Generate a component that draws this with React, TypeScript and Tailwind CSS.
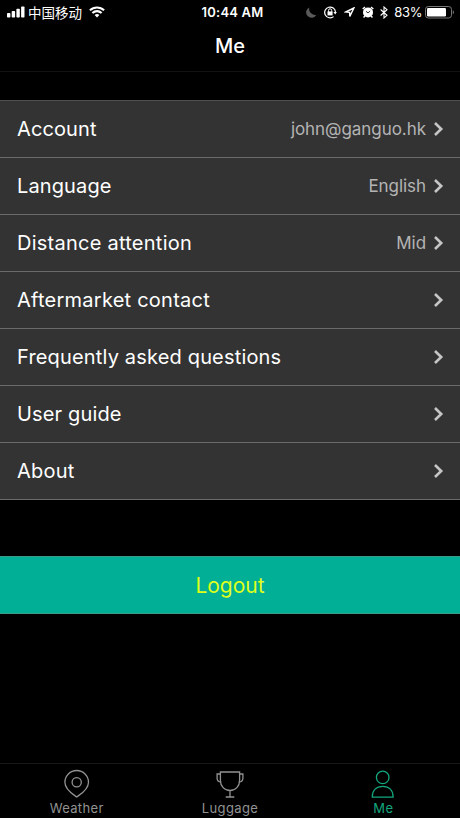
import type { ReactNode } from 'react'

type Row = { label: string; value?: string; tracking: string }

const rows: Row[] = [
  { label: 'Account', value: 'john@ganguo.hk', tracking: 'tracking-[0.12px]' },
  { label: 'Language', value: 'English', tracking: 'tracking-[0.12px]' },
  { label: 'Distance attention', value: 'Mid', tracking: 'tracking-[0.25px]' },
  { label: 'Aftermarket contact', tracking: 'tracking-[0.24px]' },
  { label: 'Frequently asked questions', tracking: 'tracking-[0.17px]' },
  { label: 'User guide', tracking: 'tracking-[0.15px]' },
  { label: 'About', tracking: 'tracking-[0.2px]' },
]

function StatusBar() {
  return (
    <div className="grid h-6 grid-cols-[1fr_auto_1fr] items-center pl-[7px] pr-[5px] text-white">
      <div className="flex items-center">
        <svg width="18" height="12" viewBox="0 0 18 12" fill="currentColor">
          <rect x="0" y="7" width="3.4" height="4.5" rx="0.8" />
          <rect x="4.7" y="5" width="3.4" height="6.5" rx="0.8" />
          <rect x="9.4" y="2.8" width="3.4" height="8.7" rx="0.8" />
          <rect x="14.1" y="0.5" width="3.4" height="11" rx="0.8" />
        </svg>
        <span className="ml-[3px] font-['Noto_Sans_CJK_SC',sans-serif] text-[13.5px] leading-6">中国移动</span>
        <svg className="ml-[7px]" width="16" height="12" viewBox="0 0 16 12" fill="none" stroke="currentColor" strokeWidth="2.1">
          <path d="M0.9 4.3a10.3 10.3 0 0 1 14.2 0" />
          <path d="M3.4 7a6.7 6.7 0 0 1 9.2 0" />
          <path d="M8 11.5L5.6 9.1a3.4 3.4 0 0 1 4.8 0z" fill="currentColor" stroke="none" />
        </svg>
      </div>
      <span className="pl-[3px] text-[13px] font-semibold leading-6 tracking-[0.2px]">10:44 AM</span>
      <div className="flex items-center justify-end">
        <svg width="11" height="11" viewBox="0 0 11 11" fill="#5a5a5a">
          <path d="M3.4 0.4A5.4 5.4 0 1 0 10.4 7.7A5.8 5.8 0 0 1 3.4 0.4z" />
        </svg>
        <svg className="ml-[7px]" width="13" height="13" viewBox="0 0 13 13" fill="none" stroke="currentColor" strokeWidth="1.2">
          <path d="M9.6 10.6A5.4 5.4 0 1 1 11.5 6.2" />
          <path d="M9.4 6h3.5l-1.7 2.4z" fill="currentColor" stroke="none" />
          <rect x="3.5" y="5.4" width="5.1" height="4" fill="currentColor" stroke="none" />
          <path d="M4.5 5.8V4.4a1.6 1.6 0 0 1 3.2 0v1.4" strokeWidth="1" />
        </svg>
        <svg className="ml-[7px]" width="11" height="11" viewBox="0 0 11 11" fill="none" stroke="currentColor" strokeWidth="1.4">
          <path d="M9.9 1L1.6 5L5.6 5.4L5.8 9.4z" />
        </svg>
        <svg className="ml-[7px]" width="12" height="12" viewBox="0 0 12 12">
          <circle cx="6" cy="6.4" r="5" fill="currentColor" />
          <path d="M0.7 3L3 0.9M11.3 3L9 0.9M2.8 10L1.6 11.5M9.2 10l1.2 1.5" stroke="currentColor" strokeWidth="1.4" />
          <path d="M4 5.3L6 6.9L8.2 5" stroke="#000" strokeWidth="0.8" fill="none" />
        </svg>
        <svg className="ml-[6px]" width="8" height="13" viewBox="0 0 8 13" fill="none" stroke="currentColor" strokeWidth="1.1">
          <path d="M0.6 3.5L7 9.3L4 12V1L7 3.7L0.6 9.5" />
        </svg>
        <span className="ml-[6px] text-[13px] leading-6 tracking-[-0.4px]">83%</span>
        <svg className="ml-[3px]" width="30" height="13" viewBox="0 0 30 13">
          <rect x="0.5" y="0.5" width="26" height="11.5" rx="2.8" fill="none" stroke="#777" />
          <rect x="2" y="2" width="19" height="8.5" rx="1.2" fill="currentColor" />
          <path d="M27.8 4.2c1.6.6 1.6 3.5 0 4.1z" fill="#777" />
        </svg>
      </div>
    </div>
  )
}

function SettingRow({ row }: { row: Row }) {
  return (
    <li className="flex h-[57px] items-center justify-between border-b border-[#6b6b6b] pl-[17px] pr-4">
      <span className={`text-[20px] text-white ${row.tracking}`}>{row.label}</span>
      <div className="flex items-center gap-[7px]">
        {row.value && <span className="text-[17px] leading-6 tracking-[-0.05px] text-[#b4b4b4]">{row.value}</span>}
        <svg width="11" height="16" viewBox="0 0 11 16" fill="none" stroke="#c6c6c6" strokeWidth="2.6">
          <path d="M2 2L8.2 8L2 14" />
        </svg>
      </div>
    </li>
  )
}

function Tab({ label, color, children }: { label: string; color: string; children: ReactNode }) {
  return (
    <div className={`flex flex-1 flex-col items-center pt-[5px] ${color}`}>
      <svg width="30" height="30" viewBox="0 0 30 30" fill="none" stroke="currentColor" strokeWidth="1.3">
        {children}
      </svg>
      <span className="mt-[2px] text-[13px] leading-[15px] tracking-[0.35px]">{label}</span>
    </div>
  )
}

export default function App() {
  return (
    <div className="flex h-[818px] w-[460px] flex-col overflow-hidden bg-black font-['Inter',sans-serif]">
      <header className="h-[72px] border-b border-[#121212]">
        <StatusBar />
        <h1 className="text-center text-[20px] font-medium leading-[45px] text-white">Me</h1>
      </header>

      <ul className="mt-7 border-t border-[#505050] bg-[#333333]">
        {rows.map((row) => (
          <SettingRow key={row.label} row={row} />
        ))}
      </ul>

      <button className="mt-14 h-[58px] w-full border-y border-[#3b9b88] bg-[#00af96] pt-px text-[21px] text-[#dfff1c]">
        Logout
      </button>

      <nav className="mt-auto flex h-[55px] border-t border-[#181818]">
        <Tab label="Weather" color="text-[#929292]">
          <path d="M14.7 28C11 25.3 2.9 20.8 2.9 13.2a11.8 11.7 0 0 1 23.6 0C26.5 20.8 18.4 25.3 14.7 28z" />
          <circle cx="14.7" cy="13.3" r="4.6" />
        </Tab>
        <Tab label="Luggage" color="text-[#929292]">
          <path d="M5.4 3h19.2v8.2c0 6-4 10.3-9.6 10.3S5.4 17.2 5.4 11.2zM15 21.5V28M10.7 28h8.6" />
          <path d="M5.4 5H2.1v4.2c0 2.3 1.3 3.6 4 3.9M24.6 5h3.3v4.2c0 2.3-1.3 3.6-4 3.9" />
        </Tab>
        <Tab label="Me" color="text-[#13a77d]">
          <circle cx="14.7" cy="8.4" r="6.3" />
          <path d="M4.3 28.2C4.3 21.5 8.2 17.4 14.7 17.4S25.1 21.5 25.1 28.2z" />
        </Tab>
      </nav>
    </div>
  )
}
